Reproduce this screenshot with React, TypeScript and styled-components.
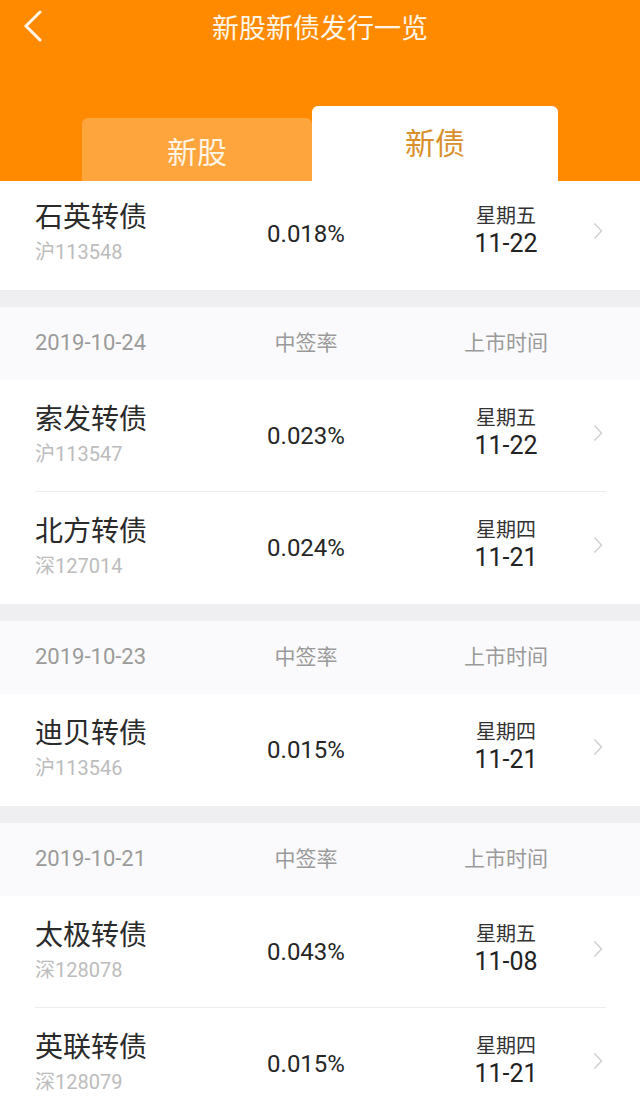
import { createGlobalStyle } from "styled-components"
import styled from "styled-components"

const GlobalStyle = createGlobalStyle`
  html, body {
    margin: 0;
    padding: 0;
    background: #ffffff;
  }
  body {
    font-family: Roboto, "Noto Sans CJK SC", "Noto Sans", sans-serif;
    -webkit-font-smoothing: antialiased;
  }
`

const Page = styled.div`
  width: 640px;
  height: 1116px;
  overflow: hidden;
  background: #ffffff;
`

const Header = styled.div`
  background: #ff8a00;
  height: 181px;
  display: flex;
  flex-direction: column;
`

const TopBar = styled.div`
  height: 54px;
  display: flex;
  align-items: center;
  justify-content: center;
  position: relative;
`

const BackButton = styled.div`
  position: absolute;
  left: 22px;
  top: 10px;
  width: 24px;
  height: 32px;
  display: flex;
  align-items: center;
`

const Title = styled.div`
  color: #fff6e8;
  font-size: 27px;
  margin-top: -2px;
`

const Tabs = styled.div`
  flex: 1;
  display: flex;
  align-items: flex-end;
  padding-left: 82px;
`

const Tab = styled.div<{ $active?: boolean }>`
  display: flex;
  align-items: center;
  justify-content: center;
  box-sizing: border-box;
  font-size: 30px;
  border-radius: 6px 6px 0 0;
  width: ${p => (p.$active ? 246 : 230)}px;
  height: ${p => (p.$active ? 75 : 63)}px;
  padding-bottom: ${p => (p.$active ? 6 : 0)}px;
  background: ${p => (p.$active ? "#ffffff" : "#ffa53d")};
  color: ${p => (p.$active ? "#d9902c" : "#fff3e2")};
`

// first row is scrolled a bit under the header, so it shows shorter
const Row = styled.div<{ $divider?: boolean; $short?: boolean }>`
  height: ${p => (p.$short ? 109 : 112)}px;
  display: flex;
  align-items: ${p => (p.$short ? "flex-start" : "center")};
  position: relative;
  background: #ffffff;
  overflow: hidden;
  ${p =>
    p.$divider
      ? `&::after {
    content: "";
    position: absolute;
    left: 35px;
    right: 34px;
    bottom: 0;
    height: 1px;
    background: #ececee;
  }`
      : ""}
`

const RowInner = styled.div<{ $short?: boolean }>`
  display: flex;
  align-items: center;
  width: 100%;
  height: ${p => (p.$short ? 106 : 112)}px;
`

const NameCol = styled.div`
  width: 200px;
  padding-left: 35px;
  display: flex;
  flex-direction: column;
  gap: 6px;
  margin-top: -2px;
`

const Name = styled.div`
  font-size: 28px;
  color: #2a2a2a;
  line-height: 32px;
`

const Code = styled.div`
  font-size: 20px;
  color: #bcbcbc;
  line-height: 24px;
`

const Rate = styled.div`
  width: 142px;
  text-align: center;
  font-size: 24px;
  color: #262626;
`

const DateCol = styled.div`
  width: 130px;
  margin-left: 64px;
  display: flex;
  flex-direction: column;
  align-items: center;
  margin-top: -6px;
`

const Weekday = styled.div`
  font-size: 20px;
  color: #333333;
  line-height: 26px;
`

const Day = styled.div`
  font-size: 25px;
  color: #222222;
  line-height: 30px;
`

const Chevron = styled.div`
  width: 10px;
  display: flex;
  justify-content: center;
  margin-left: 22px;
  margin-top: -6px;
`

const Gap = styled.div`
  height: 17px;
  background: #efeff1;
`

const GroupHead = styled.div`
  height: 73px;
  background: #fafafc;
  display: flex;
  align-items: center;
  font-size: 21px;
  color: #9a9a9a;
  padding-bottom: 2px;
  box-sizing: border-box;
`

const HeadDate = styled.div`
  width: 200px;
  padding-left: 35px;
  font-size: 22px;
`

const HeadRate = styled.div`
  width: 142px;
  text-align: center;
  margin-top: -3px;
`

const HeadList = styled.div`
  width: 130px;
  margin-left: 64px;
  text-align: center;
  margin-top: -3px;
`

type Bond = {
  name: string
  code: string
  rate: string
  weekday: string
  day: string
}

type Group = {
  date?: string
  items: Bond[]
}

const groups: Group[] = [
  {
    items: [{ name: "石英转债", code: "沪113548", rate: "0.018%", weekday: "星期五", day: "11-22" }],
  },
  {
    date: "2019-10-24",
    items: [
      { name: "索发转债", code: "沪113547", rate: "0.023%", weekday: "星期五", day: "11-22" },
      { name: "北方转债", code: "深127014", rate: "0.024%", weekday: "星期四", day: "11-21" },
    ],
  },
  {
    date: "2019-10-23",
    items: [{ name: "迪贝转债", code: "沪113546", rate: "0.015%", weekday: "星期四", day: "11-21" }],
  },
  {
    date: "2019-10-21",
    items: [
      { name: "太极转债", code: "深128078", rate: "0.043%", weekday: "星期五", day: "11-08" },
      { name: "英联转债", code: "深128079", rate: "0.015%", weekday: "星期四", day: "11-21" },
    ],
  },
]

const ArrowRight = () => (
  <svg width="10" height="18" viewBox="0 0 10 18">
    <path d="M1.5 1.5 L8.5 9 L1.5 16.5" fill="none" stroke="#cfcfd2" strokeWidth="1.4" />
  </svg>
)

const BondRow = ({ bond, divider, short }: { bond: Bond; divider?: boolean; short?: boolean }) => (
  <Row $divider={divider} $short={short}>
    <RowInner $short={short}>
      <NameCol>
        <Name>{bond.name}</Name>
        <Code>{bond.code}</Code>
      </NameCol>
      <Rate>{bond.rate}</Rate>
      <DateCol>
        <Weekday>{bond.weekday}</Weekday>
        <Day>{bond.day}</Day>
      </DateCol>
      <Chevron>
        <ArrowRight />
      </Chevron>
    </RowInner>
  </Row>
)

export default function App() {
  return (
    <Page>
      <GlobalStyle />
      <Header>
        <TopBar>
          <BackButton>
            <svg width="22" height="32" viewBox="0 0 22 32">
              <path d="M18 2 L4 16 L18 30" fill="none" stroke="#fff6e8" strokeWidth="3" strokeLinecap="round" />
            </svg>
          </BackButton>
          <Title>新股新债发行一览</Title>
        </TopBar>
        <Tabs>
          <Tab>新股</Tab>
          <Tab $active>新债</Tab>
        </Tabs>
      </Header>
      {groups.map((g, gi) => (
        <div key={gi}>
          {g.date && (
            <>
              <Gap />
              <GroupHead>
                <HeadDate>{g.date}</HeadDate>
                <HeadRate>中签率</HeadRate>
                <HeadList>上市时间</HeadList>
              </GroupHead>
            </>
          )}
          {g.items.map((b, i) => (
            <BondRow
              key={b.code}
              bond={b}
              short={gi === 0}
              divider={i < g.items.length - 1}
            />
          ))}
        </div>
      ))}
    </Page>
  )
}
